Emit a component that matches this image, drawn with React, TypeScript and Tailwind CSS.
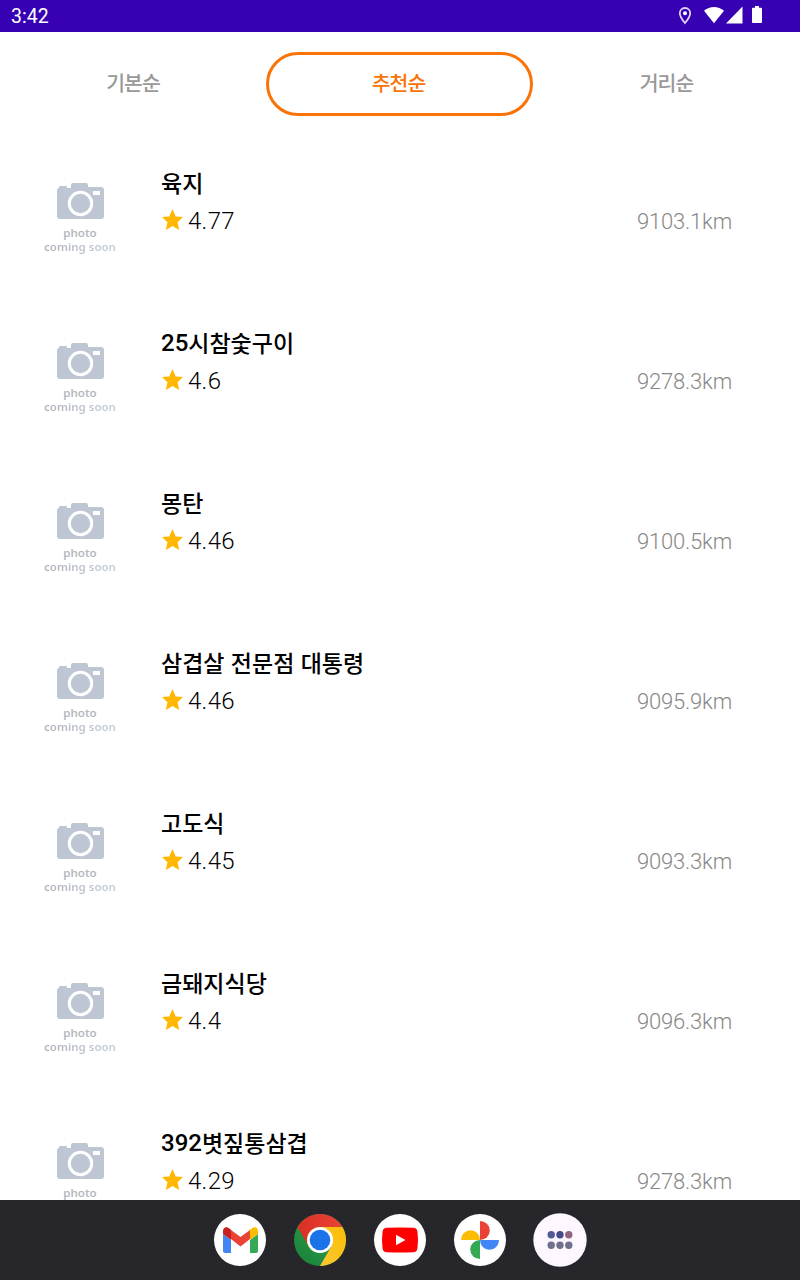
import React from "react";

type Place = { name: string; latin?: string; rating: string; distance: string };

const places: Place[] = [
  { name: "육지", rating: "4.77", distance: "9103.1km" },
  { latin: "25", name: "시참숯구이", rating: "4.6", distance: "9278.3km" },
  { name: "몽탄", rating: "4.46", distance: "9100.5km" },
  { name: "삼겹살 전문점 대통령", rating: "4.46", distance: "9095.9km" },
  { name: "고도식", rating: "4.45", distance: "9093.3km" },
  { name: "금돼지식당", rating: "4.4", distance: "9096.3km" },
  { latin: "392", name: "볏짚통삼겹", rating: "4.29", distance: "9278.3km" },
];

function StatusBar() {
  return (
    <header className="flex h-8 shrink-0 items-center justify-between bg-[#3700b3] pl-[11px] pr-[37px] text-white">
      <span className="pt-px font-['Roboto',sans-serif] text-[19.500px] leading-8">3:42</span>
      <svg width="86" height="32" viewBox="677 0 86 32" fill="#fff">
        <path d="M685 8c-3.100 0-5.200 2.300-5.200 5.200 0 3.500 5.200 9.800 5.200 9.800s5.200-6.300 5.200-9.800c0-2.900-2.100-5.200-5.200-5.200z" fill="none" stroke="#ded5f3" strokeWidth="1.800" />
        <circle cx="685" cy="13.200" r="2" />
        <path d="M704 10.700C709.500 5.600 718.500 5.600 724 10.700L714 23.200z" />
        <path d="M742.500 6.500v17H726z" />
        <path d="M755 6h4v1.700h2q1 0 1 1V22q0 1-1 1h-8q-1 0-1-1V8.700q0-1 1-1h2z" />
      </svg>
    </header>
  );
}

function SortTabs() {
  return (
    <nav className="mt-5 flex h-16 shrink-0 text-center font-['Noto_Sans_CJK_KR',sans-serif] text-[20.500px] font-medium tracking-[-1px]">
      <button className="w-[266px] pb-1 text-[#999]">기본순</button>
      <button className="w-[267px] rounded-[32px] border-[3px] border-[#f97308] pb-1 pr-0.5 text-[#f97308]">추천순</button>
      <button className="w-[267px] pb-1 text-[#999]">거리순</button>
    </nav>
  );
}

function PhotoPlaceholder() {
  return (
    <div className="flex w-[160px] flex-col items-center pt-[46px] font-['Noto_Sans',sans-serif] text-[11.500px] font-semibold leading-[14px] text-[#b4b9c0]">
      <svg width="47" height="38" viewBox="0 0 47 38">
        <path d="M2 5V4q0-1 1-1h6q1 0 1 1v1h4v-3q0-2 2-2h13q2 0 2 2v2h13q3 0 3 3v26q0 3-3 3H3q-3 0-3-3V8q0-3 2-3z" fill="#bec5d3" />
        <circle cx="23.500" cy="20.500" r="11.200" fill="none" stroke="#fff" strokeWidth="3" />
        <path d="M36 8h7v4h-7z" fill="#fff" />
      </svg>
      <span className="mt-[5px]">photo</span>
      <span className="whitespace-nowrap bg-gradient-to-r from-[#aeb4b9] to-[#c5ccd8] bg-clip-text text-transparent">coming soon</span>
    </div>
  );
}

function PlaceRow({ place }: { place: Place }) {
  return (
    <li className="flex h-40 shrink-0">
      <PhotoPlaceholder />
      <div className="flex-1 pl-px pt-[29px]">
        <h2 className="flex h-8 items-center whitespace-nowrap font-['Noto_Sans_CJK_KR',sans-serif] text-[23px] font-medium leading-8 text-black [word-spacing:1.200px]">
          {place.latin && <span className="pt-0.5 font-['Roboto',sans-serif] text-[24px] font-medium">{place.latin}</span>}
          <span>{place.name}</span>
        </h2>
        <div className="mt-[5px] flex h-8 items-center">
          <svg className="ml-px" width="21" height="21" viewBox="0 0 21 21">
            <path d="M10.500 0l3.200 7.500 7.300.6-5.500 5.200L17.200 21l-6.700-4L3.800 21l1.700-7.700L0 8.100l7.300-.6z" fill="#ffb700" />
          </svg>
          <span className="ml-[5px] pt-[3px] font-['Roboto',sans-serif] text-[24px] font-light leading-8 tracking-[.3px] text-black">{place.rating}</span>
        </div>
      </div>
      <span className="w-[163px] pt-[69px] font-['Roboto',sans-serif] text-[22px] font-light leading-8 tracking-[-.2px] text-[#888]">{place.distance}</span>
    </li>
  );
}

function Gmail() {
  return (
    <svg width="52" height="52" viewBox="0 0 52 52">
      <circle cx="26" cy="26" r="26" fill="#fff" />
      <path d="M9 20l8 6v13h-6q-2 0-2-2z" fill="#4285f4" />
      <path d="M36 26l8-6v17q0 2-2 2h-6z" fill="#34a853" />
      <path d="M17 16l9.500 7 9.500-7v9l-9.500 7.500-9.500-7.500z" fill="#ea4335" />
      <path d="M9 20v-3c0-4 4-5 7-2l1 1v10z" fill="#c5221f" />
      <path d="M36 26V16l1-1c3-3 7-2 7 2v3z" fill="#fbbc04" />
    </svg>
  );
}

function Chrome() {
  return (
    <svg width="52" height="52" viewBox="0 0 52 52">
      <defs>
        <linearGradient id="green" x1="0" y1="1" x2="1" y2="0"><stop stopColor="#188038" /><stop offset="1" stopColor="#34a853" /></linearGradient>
        <linearGradient id="red"><stop stopColor="#d93025" /><stop offset="1" stopColor="#ea4335" /></linearGradient>
        <linearGradient id="yellow" x1="0" y1="1" x2="1" y2="0"><stop stopColor="#fcc934" /><stop offset="1" stopColor="#fbbc04" /></linearGradient>
      </defs>
      <circle cx="26" cy="26" r="26" fill="url(#green)" />
      <path d="M26 13h22.500A26 26 0 0 1 26 52l11.300-19.500z" fill="url(#yellow)" />
      <path d="M3.500 13a26 26 0 0 1 45 0H26L14.700 32.500z" fill="url(#red)" />
      <circle cx="26" cy="26" r="13" fill="#fff" />
      <circle cx="26" cy="26" r="10.300" fill="#1a73e8" />
    </svg>
  );
}

function YouTube() {
  return (
    <svg width="52" height="52" viewBox="0 0 52 52">
      <circle cx="26" cy="26" r="26" fill="#fff" />
      <path d="M13 13.800Q26 13 39 13.800q4 .2 4.500 4Q44.500 26 43.500 34.200q-.5 3.800-4.500 4Q26 39 13 38.200q-4-.2-4.500-4Q7.500 26 8.500 17.800q.5-3.800 4.500-4z" fill="#f00" />
      <path d="M22 20.800v10.400l9.500-5.200z" fill="#fff" />
    </svg>
  );
}

function Photos() {
  return (
    <svg width="52" height="52" viewBox="0 0 52 52">
      <circle cx="26" cy="26" r="26" fill="#fff" />
      <path d="M26 26V7a9.800 9.500 0 0 1 0 19z" fill="#ea4335" />
      <path d="M26 26h19a9.500 9.800 0 0 1-19 0z" fill="#4285f4" />
      <path d="M26 26v19a9.800 9.500 0 0 1 0-19z" fill="#34a853" />
      <path d="M26 26H7a9.500 9.800 0 0 1 19 0z" fill="#fbbc04" />
    </svg>
  );
}

function AppDrawer() {
  return (
    <svg width="54" height="54" viewBox="0 0 54 54">
      <circle cx="27" cy="27" r="26.700" fill="#fef7ff" />
      <circle cx="18.200" cy="21.700" r="3.700" fill="#535a94" />
      <circle cx="27" cy="21.700" r="3.700" fill="#444b86" />
      <circle cx="35.800" cy="21.700" r="3.700" fill="#8e647e" />
      <circle cx="18.200" cy="32.300" r="3.700" fill="#70708a" />
      <circle cx="27" cy="32.300" r="3.700" fill="#70708a" />
      <circle cx="35.800" cy="32.300" r="3.700" fill="#70708a" />
    </svg>
  );
}

export default function App() {
  return (
    <div className="flex h-[1280px] w-[800px] flex-col overflow-hidden bg-white">
      <StatusBar />
      <SortTabs />
      <ul className="flex min-h-0 flex-1 flex-col overflow-hidden pt-[21px]">
        {places.map((place) => <PlaceRow key={place.name} place={place} />)}
      </ul>
      <footer className="flex h-20 shrink-0 items-center bg-[#27262b] pl-[214px]">
        <div className="flex items-center gap-7">
          <Gmail />
          <Chrome />
          <YouTube />
          <Photos />
        </div>
        <div className="ml-[27px]"><AppDrawer /></div>
      </footer>
    </div>
  );
}
